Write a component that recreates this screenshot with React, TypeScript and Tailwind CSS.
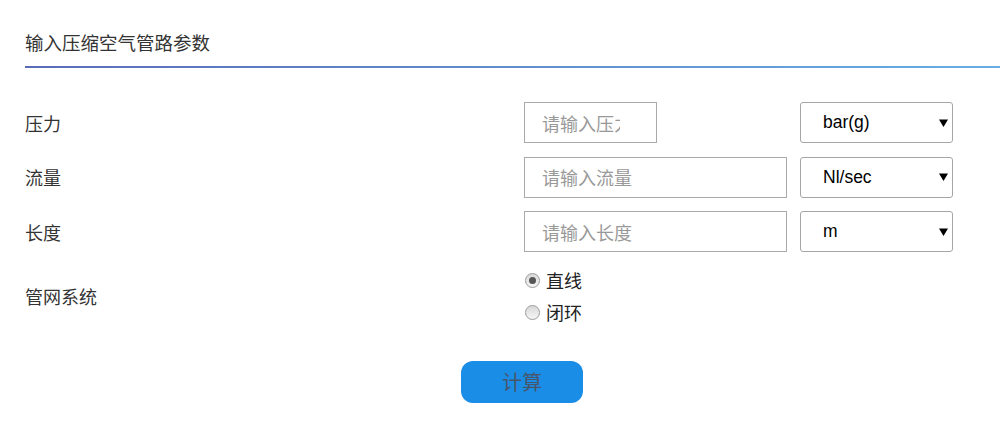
import { useState } from 'react'

const font = "font-['Noto_Sans_CJK_SC','Noto_Sans',sans-serif]"

type Row = {
    label: string
    placeholder: string
    inputWidth: string
    units: string[]
}

const rows: Row[] = [
    { label: '压力', placeholder: '请输入压力', inputWidth: 'w-[133px]', units: ['bar(g)', 'psi(g)', 'MPa'] },
    { label: '流量', placeholder: '请输入流量', inputWidth: 'w-[263px]', units: ['Nl/sec', 'Nm³/min', 'cfm'] },
    { label: '长度', placeholder: '请输入长度', inputWidth: 'w-[263px]', units: ['m', 'ft'] },
]

// Unit dropdown with a plain black triangle
const UnitSelect = ({ units }: { units: string[] }) => (
    <div className="relative w-[153px] h-full">
        <select className="appearance-none w-full h-full border border-[#a6a6a6] rounded-[3px] bg-white pl-[22px] text-[17.5px] text-black font-['Liberation_Sans',Arial,sans-serif] outline-none">
            {units.map((u) => (
                <option key={u}>{u}</option>
            ))}
        </select>
        <svg className="absolute right-[5px] top-1/2 -translate-y-1/2 pointer-events-none" width="9" height="9" viewBox="0 0 9 9">
            <path d="M0 1h9L4.5 8.5z" fill="#000" />
        </svg>
    </div>
)

const Radio = ({ checked, label, onClick }: { checked: boolean; label: string; onClick: () => void }) => (
    <button onClick={onClick} className="h-[32px] flex items-center gap-[6px] pl-[1px]">
        <span className="w-[15px] h-[15px] rounded-full border border-[#9c9c9c] bg-gradient-to-b from-[#d8d8d8] to-[#f6f6f6] flex items-center justify-center">
            {checked && <span className="w-[7px] h-[7px] rounded-full bg-[#555]" />}
        </span>
        <span className="text-[18px] leading-none text-[#222]">{label}</span>
    </button>
)

export default function App() {
    const [loop, setLoop] = useState(false)

    return (
        <div className={`w-[1000px] h-[437px] bg-white ${font} text-[#333]`}>
            {/* Header */}
            <div className="pt-[30px] pl-[25px]">
                <h1 className="text-[18.5px] leading-[24px] font-normal text-[#333]">输入压缩空气管路参数</h1>
                <div className="mt-[12px] h-[2px] bg-gradient-to-r from-[#5a6cb8] to-[#66aee3]" />
            </div>

            {/* Form */}
            <div className="pl-[25px] mt-[34px] flex flex-col gap-[13.5px]">
                {rows.map((r) => (
                    <div key={r.label} className="flex items-center h-[41px]">
                        <div className="w-[499px] text-[18px] leading-none">{r.label}</div>
                        <div className="w-[276px] h-full">
                            <input
                                placeholder={r.placeholder}
                                className={`${r.inputWidth} h-full border border-[#a9a9a9] pl-[17px] pr-[36px] text-[18px] placeholder:text-[#999] outline-none`}
                            />
                        </div>
                        <UnitSelect units={r.units} />
                    </div>
                ))}
            </div>

            <div className="pl-[25px] mt-[12px] flex items-center">
                <div className="w-[499px] text-[18px] leading-none">管网系统</div>
                <div className="flex flex-col">
                    <Radio checked={!loop} label="直线" onClick={() => setLoop(false)} />
                    <Radio checked={loop} label="闭环" onClick={() => setLoop(true)} />
                </div>
            </div>

            <div className="mt-[33px] pl-[461px]">
                <button className="w-[122px] h-[42px] rounded-[12px] bg-[#1a8de6] text-[20px] text-[#48556a]">计算</button>
            </div>
        </div>
    )
}
